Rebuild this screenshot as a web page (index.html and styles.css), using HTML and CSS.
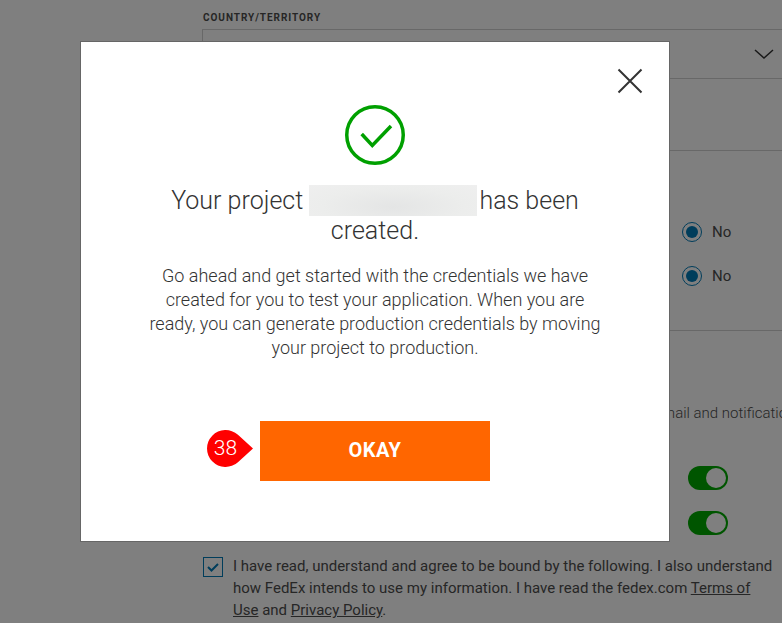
FILE: index.html
```html
<!DOCTYPE html>
<html lang="en">
<head>
  <meta charset="UTF-8" />
  <meta name="viewport" content="width=device-width, initial-scale=1" />
  <title>Create project</title>
  <link rel="stylesheet" href="styles.css">
</head>
<body>

  <!-- Form behind the dialog -->
  <main class="form">
    <label class="field-label">COUNTRY/TERRITORY</label>
    <div class="select">
      <svg class="chevron" width="20" height="10" viewBox="0 0 20 10" aria-hidden="true">
        <path d="M1 1l9 8 9-8" fill="none" stroke="currentColor" stroke-width="1.5" />
      </svg>
    </div>

    <hr class="divider divider-first" />

    <div class="radio-row radio-row-first"><span class="radio"></span>No</div>
    <div class="radio-row radio-row-second"><span class="radio"></span>No</div>

    <hr class="divider divider-second" />

    <p class="notify-text">Choose how you would like to receive project updates by email and notifications</p>

    <div class="toggle-row toggle-row-first"><span class="toggle"></span></div>
    <div class="toggle-row toggle-row-second"><span class="toggle"></span></div>

    <div class="agree">
      <span class="checkbox">
        <svg width="14" height="12" viewBox="0 0 14 12" aria-hidden="true">
          <path d="M2 6l3.5 3.5L12 3" fill="none" stroke="currentColor" stroke-width="2" />
        </svg>
      </span>
      <p>I have read, understand and agree to be bound by the following. I also understand how FedEx intends to use my information. I have read the fedex.com <a href="#">Terms of Use</a> and <a href="#">Privacy Policy</a>.</p>
    </div>
  </main>

  <div class="overlay"></div>

  <!-- Dialog -->
  <section class="modal" role="dialog" aria-label="Project created">
    <button class="close" aria-label="Close">
      <svg width="26" height="26" viewBox="0 0 26 26" aria-hidden="true">
        <path d="M1.5 1.5l23 23M24.5 1.5l-23 23" fill="none" stroke="currentColor" stroke-width="2" />
      </svg>
    </button>

    <svg class="success" width="60" height="60" viewBox="0 0 60 60" aria-hidden="true">
      <circle cx="30" cy="30" r="28.250" fill="none" stroke="currentColor" stroke-width="3.500" />
      <path d="M16.700 29l10.600 11.500L46 21" fill="none" stroke="currentColor" stroke-width="3.500" />
    </svg>

    <h1 class="title">Your project <span class="redacted"></span> has been created.</h1>

    <p class="message">Go ahead and get started with the credentials we have created for you to test your application. When you are ready, you can generate production credentials by moving your project to production.</p>

    <div class="action">
      <div class="step-badge">
        <svg width="46" height="37" viewBox="0 0 46 37" aria-hidden="true">
          <path d="M46 18.500L30.950 4.800A18.500 18.500 0 1 0 30.950 32.200Z" fill="#f00" />
        </svg>
        <span>38</span>
      </div>
      <button class="okay">OKAY</button>
    </div>
  </section>

</body>
</html>
```

FILE: styles.css
```css
/* Reset */
* {
  margin: 0;
  padding: 0;
  box-sizing: border-box;
}

html, body {
  height: 100%;
  overflow: hidden;
  font-family: 'Roboto', 'Liberation Sans', sans-serif;
  background: #fff;
  color: #4d4d4d;
}

/* Form behind the dialog */
.form {
  display: flex;
  flex-direction: column;
  padding: 12px 0 0 203px;
}

.field-label {
  font-size: 10px;
  line-height: 12px;
  font-weight: 700;
  letter-spacing: 0.95px;
}

.select {
  display: flex;
  align-items: center;
  justify-content: flex-end;
  height: 50px;
  margin-top: 5px;
  margin-left: -1px;
  padding-right: 8px;
  border: 1px solid #d0d0d0;
  border-right: 0;
  color: #333;
}

.divider {
  border: 0;
  border-top: 1px solid #d0d0d0;
}

.divider-first {
  margin-top: 71px;
}

.radio-row {
  display: flex;
  align-items: center;
  gap: 10px;
  height: 22px;
  padding-left: 479px;
  font-size: 15px;
}

.radio-row-first {
  margin-top: 70px;
}

.radio-row-second {
  margin-top: 22px;
}

.radio {
  width: 20px;
  height: 20px;
  border: 1px solid #007ab7;
  border-radius: 50%;
  background: #007ab7;
  background-clip: content-box;
  padding: 3px;
}

.divider-second {
  margin-top: 43px;
}

.notify-text {
  margin-top: 73px;
  margin-left: 78px;
  font-size: 15px;
  line-height: 18px;
  font-weight: 300;
  white-space: nowrap;
}

.toggle-row {
  display: flex;
  padding-left: 485px;
}

.toggle-row-first {
  margin-top: 44px;
}

.toggle-row-second {
  margin-top: 21px;
}

.toggle {
  display: flex;
  justify-content: flex-end;
  align-items: center;
  width: 40px;
  height: 24px;
  padding: 1px;
  border-radius: 12px;
  background: #00aa00;
}

.toggle::after {
  content: "";
  width: 20px;
  height: 20px;
  margin-right: 1px;
  border-radius: 50%;
  background: #fff;
}

.agree {
  display: flex;
  gap: 10px;
  margin-top: 20px;
  font-size: 15px;
  line-height: 22px;
}

.checkbox {
  display: flex;
  align-items: center;
  justify-content: center;
  flex: none;
  width: 20px;
  height: 20px;
  margin-top: 2px;
  border: 1px solid #007ab7;
  color: #007ab7;
}

.agree p {
  width: 540px;
}

.agree a {
  color: inherit;
}

/* Overlay */
.overlay {
  position: fixed;
  inset: 0;
  background: rgba(0, 0, 0, 0.5);
}

/* Dialog */
.modal {
  position: fixed;
  top: 41px;
  left: 80px;
  width: 590px;
  height: 501px;
  display: flex;
  flex-direction: column;
  align-items: center;
  padding-top: 63px;
  background: #fff;
  border: 1px solid #666;
  color: #333;
}

.close {
  position: absolute;
  top: 26px;
  right: 26px;
  display: flex;
  border: 0;
  background: none;
  color: #333;
  cursor: pointer;
}

.success {
  color: #00a000;
}

.title {
  width: 440px;
  margin-top: 21px;
  font-size: 25px;
  line-height: 30px;
  font-weight: 300;
  text-align: center;
}

.redacted {
  display: inline-block;
  vertical-align: -7px;
  width: 168px;
  height: 31px;
  margin-top: -6px;
  margin-right: -4px;
  background: radial-gradient(ellipse at 50% 70%, #e4e5e5, #ecedec 60%, #efefef);
}

.message {
  width: 455px;
  margin-top: 18px;
  font-size: 18px;
  line-height: 24px;
  font-weight: 300;
  text-align: center;
}

.action {
  position: relative;
  margin-top: 61px;
}

.okay {
  display: block;
  width: 230px;
  height: 60px;
  padding-bottom: 2px;
  border: 0;
  background: #ff6600;
  color: #fff;
  font-family: inherit;
  font-size: 20px;
  font-weight: 700;
  letter-spacing: 0.5px;
  cursor: pointer;
}

.step-badge {
  position: absolute;
  top: 9px;
  left: -53px;
  width: 46px;
  height: 37px;
  display: flex;
}

.step-badge span {
  position: absolute;
  top: 0;
  left: 0;
  width: 37px;
  font-size: 21px;
  line-height: 37px;
  font-weight: 300;
  text-align: center;
  color: #fff;
}
```
